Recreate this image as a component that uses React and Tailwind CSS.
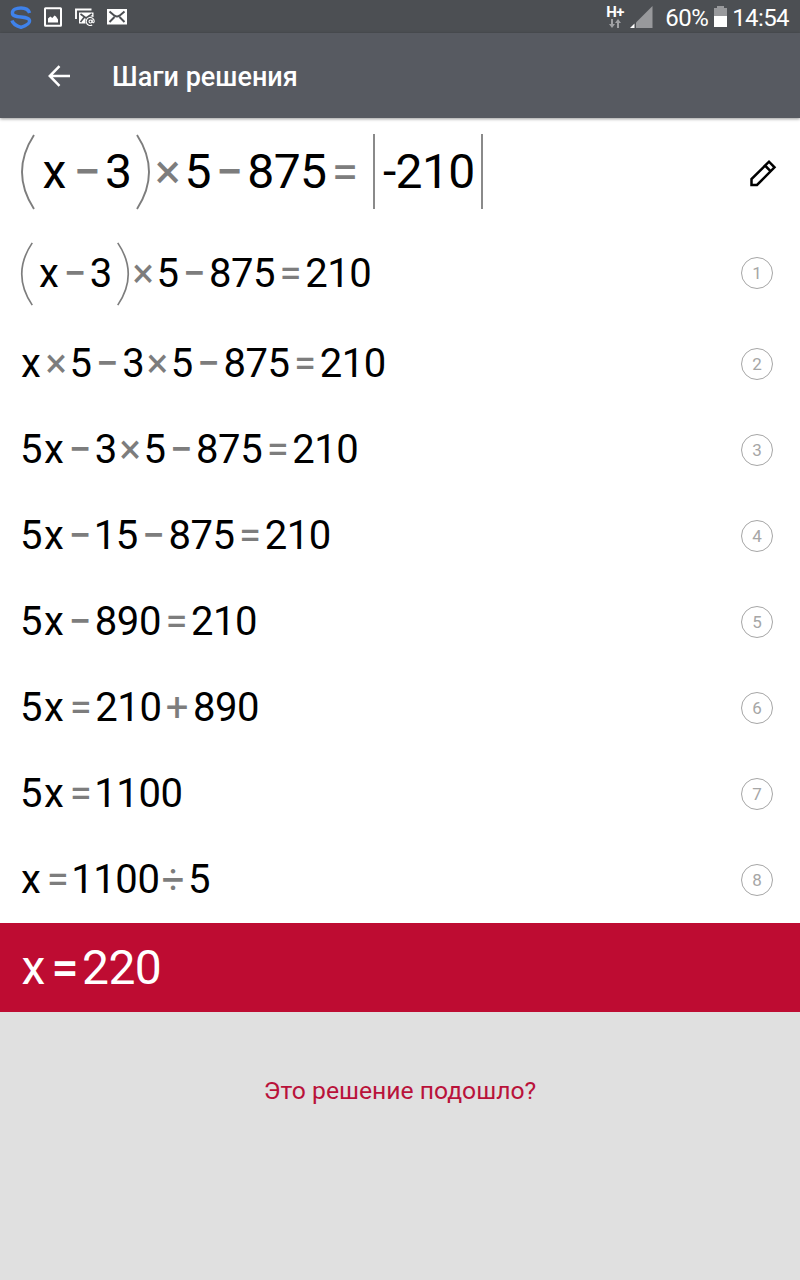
const OPS = {
  '−': 'w-[28.8px] pr-[1px] font-medium',
  '=': 'w-[29.3px]',
  '×': 'w-[26.6px]',
  '+': 'w-[31.5px]',
  '÷': 'w-[28.5px] pr-[1px]',
};

const OPS_LARGE = {
  '−': 'w-[36px] font-medium',
  '=': 'w-[34px]',
  '×': 'w-[33px]',
};

const AFTER_NUMBER = {
  '−': 'ml-[1.8px]',
  '=': 'ml-[0.8px]',
};

const AFTER_NUMBER_LARGE = {
  '−': 'ml-[0.5px]',
  '=': 'ml-[1.5px]',
};

function Paren({ right, large }) {
  return (
    <svg
      className={large ? 'w-[16px] h-[76px]' : 'w-[14px] h-[64px]'}
      viewBox="0 0 16 76"
      preserveAspectRatio="none"
      fill="none"
      stroke="#7d7d7d"
      strokeWidth="1.9"
    >
      <path d={right ? 'M2 1Q26 38 2 75' : 'M14 1Q-10 38 14 75'} />
    </svg>
  );
}

function Bar() {
  return <span className="h-[75px] w-[2px] bg-[#8a8a8a]" />;
}

function Token({ value, large, light, first, afterNumber }) {
  const ops = large ? OPS_LARGE : OPS;
  const gaps = large ? AFTER_NUMBER_LARGE : AFTER_NUMBER;
  if (value === '(') return <Paren large={large} />;
  if (value === ')') return <Paren right large={large} />;
  if (ops[value]) {
    return (
      <span
        className={`${ops[value]} ${afterNumber ? gaps[value] ?? '' : ''} flex shrink-0 justify-center ${light ? 'font-medium text-white' : 'text-[#7d7d7d]'}`}
      >
        {value}
      </span>
    );
  }
  if (value === 'x') {
    return (
      <span className={`${large ? 'w-[29px]' : 'w-[24px]'} ${first ? '-ml-[1px]' : ''} flex shrink-0 justify-center`}>
        x
      </span>
    );
  }
  return (
    <span
      className={`${large ? 'tracking-[-0.6px]' : 'tracking-[-0.45px]'} ${!first && value[0] === '1' ? '-ml-[1px]' : ''}`}
    >
      {value}
    </span>
  );
}

function Expr({ tokens, large, light }) {
  const list = tokens.split(' ');
  return (
    <div className={`flex items-center whitespace-pre leading-none ${large ? 'text-[48px]' : 'text-[40px]'}`}>
      {list.map((t, i) => (
        <Token
          key={i}
          value={t}
          large={large}
          light={light}
          first={i === 0}
          afterNumber={i > 0 && /\d/.test(list[i - 1])}
        />
      ))}
    </div>
  );
}

const STEPS = [
  'x × 5 − 3 × 5 − 875 = 210',
  '5 x − 3 × 5 − 875 = 210',
  '5 x − 15 − 875 = 210',
  '5 x − 890 = 210',
  '5 x = 210 + 890',
  '5 x = 1100',
  'x = 1100 ÷ 5',
];

function Badge({ n }) {
  return (
    <span className="flex size-8 items-center justify-center rounded-full border border-[#a6a6a6] text-[17px] leading-none text-[#a6a6a6]">
      {n}
    </span>
  );
}

function StatusBar() {
  return (
    <div className="flex h-[33px] items-center justify-between bg-[#4c4f53] text-white">
      <div className="flex items-center pl-[10px]">
        <svg className="h-[24px] w-[22px]" viewBox="0 0 22 24" fill="none" stroke="#3f82ea" strokeWidth="3.4">
          <path d="M19.6 8C18.5 4.3 14.9 3 11 3 6 3 2.4 4.8 2.4 8c0 3 3 3.4 8.6 4 5.8.6 8.6 1.4 8.6 4 0 3-4.6 5-8.6 6.3C6.5 20.900 2.800 19 2 15.500" />
        </svg>
        <svg className="ml-[12px] h-[20px] w-[18px]" viewBox="0 0 18 20">
          <rect x="1" y="1.2" width="16" height="17.6" rx="0.5" fill="none" stroke="#fff" strokeWidth="2" />
          <path d="M4 15.500v-4l2.300-2 2 1.500 2.200-2.500 1.500 1 2 3v3z" fill="#fff" />
        </svg>
        <svg className="ml-[12px] h-[20px] w-[22px]" viewBox="0 0 22 20">
          <path d="M2 12V2.500h15.500" fill="none" stroke="#fff" strokeWidth="1.9" />
          <path d="M5 5.500h14.500V10l-4 1-3 5.500H5z" fill="#fff" />
          <path d="M6.500 7l5.500 4L18 7M6.500 15l3.500-4.500" fill="none" stroke="#4c4f53" strokeWidth="1.6" />
          <circle cx="16.500" cy="14.500" r="5.300" fill="#4c4f53" />
          <circle cx="16.500" cy="14.500" r="1.500" fill="none" stroke="#fff" strokeWidth="1.1" />
          <path d="M18.200 12.500v2.500q1.500 1.800 2-.5a4 4 0 1 0-2 3.400" fill="none" stroke="#fff" strokeWidth="1.1" />
        </svg>
        <svg className="ml-[11px] h-[16px] w-[20px]" viewBox="0 0 20 16">
          <rect width="20" height="15.500" fill="#fff" />
          <path d="M2.500 2.500l5 4.200q2.500 1.600 5 0l5-4.200M2.500 13l5-5M17.500 13l-5-5" fill="none" stroke="#4c4f53" strokeWidth="2" />
        </svg>
      </div>
      <div className="flex items-center pr-[11px]">
        <div className="flex w-[18px] flex-col items-center">
          <span className="text-[15px] font-bold leading-[14px] tracking-[-0.5px]">H+</span>
          <svg className="h-[9px] w-[12px]" viewBox="0 0 12 9" fill="#a0a1a4">
            <path d="M2 0h2v5h2L3 9 0 5h2zM8 9h2V4h2L9 0 6 4h2z" />
          </svg>
        </div>
        <svg className="ml-[6px] h-[22px] w-[23px]" viewBox="0 0 23 22">
          <path d="M22.500 0v22H6V16.500z" fill="#98999c" />
          <path d="M4.500 17.500V22H0z" fill="#fff" />
        </svg>
        <span className="ml-[12px] pt-[2px] text-[24px] leading-none tracking-[-0.5px]">60%</span>
        <svg className="ml-[6px] h-[21px] w-[13px]" viewBox="0 0 13 21">
          <path d="M3 0h7v2h3v8H0V2h3z" fill="#98999c" />
          <path d="M0 10h13v11H0z" fill="#fff" />
        </svg>
        <span className="ml-[5px] pt-[2px] text-[24px] leading-none tracking-[-0.6px]">14:54</span>
      </div>
    </div>
  );
}

export default function App() {
  return (
    <div className="flex h-[1280px] w-[800px] flex-col bg-[#e0e0e0] font-['Roboto',sans-serif] text-black">
      <StatusBar />
      <header className="z-10 flex h-[85px] items-center bg-[#575a61] pl-[48px] text-white shadow-[0_1px_3px_rgba(0,0,0,0.4)]">
        <svg className="h-[22px] w-[22px]" viewBox="0 0 22 22" fill="none" stroke="#fff" strokeWidth="2.5">
          <path d="M22 11H2M11.500 1.200L1.800 11l9.700 9.800" />
        </svg>
        <h1 className="ml-[42px] pt-[3px] text-[27px] font-medium leading-none">Шаги решения</h1>
      </header>
      <main className="bg-white">
        <div className="flex h-[107px] items-center justify-between pl-[20px] pr-[23px]">
          <div className="flex items-center">
            <Expr large tokens="(" />
            <div className="ml-[5px] pt-[1px]"><Expr large tokens="x − 3" /></div>
            <div className="ml-[4px]"><Expr large tokens=") × 5 − 875 =" /></div>
            <div className="ml-[11px] flex items-center">
              <Bar />
              <div className="ml-[8px] mr-[6.5px] pt-[1px]"><Expr large tokens="-210" /></div>
              <Bar />
            </div>
          </div>
          <svg className="mt-[2px] h-[28px] w-[28px]" viewBox="0 0 28 28" fill="none" stroke="#000" strokeWidth="2.5">
            <path d="M2.500 26V20L20 2.700l5.500 5.600L8 26zM16 6.500l5.500 5.600" />
          </svg>
        </div>
        <div className="flex h-[96px] items-center justify-between pl-[20px] pr-[27px]">
          <div className="flex items-center pt-[1px]">
            <Expr tokens="(" />
            <div className="ml-[4px]"><Expr tokens="x − 3" /></div>
            <div className="ml-[4px]"><Expr tokens=") × 5 − 875 = 210" /></div>
          </div>
          <Badge n={1} />
        </div>
        {STEPS.map((s, i) => (
          <div key={s} className="flex h-[86px] items-center justify-between pl-[20px] pr-[27px]">
            <Expr tokens={s} />
            <Badge n={i + 2} />
          </div>
        ))}
      </main>
      <div className="flex h-[89px] items-center bg-[#be0c32] pl-[20px] text-white">
        <Expr large light tokens="x = 220" />
      </div>
      <div className="flex justify-center pt-[65px]">
        <p className="text-[24.7px] leading-[27px] text-[#b9123a]">Это решение подошло?</p>
      </div>
    </div>
  );
}
